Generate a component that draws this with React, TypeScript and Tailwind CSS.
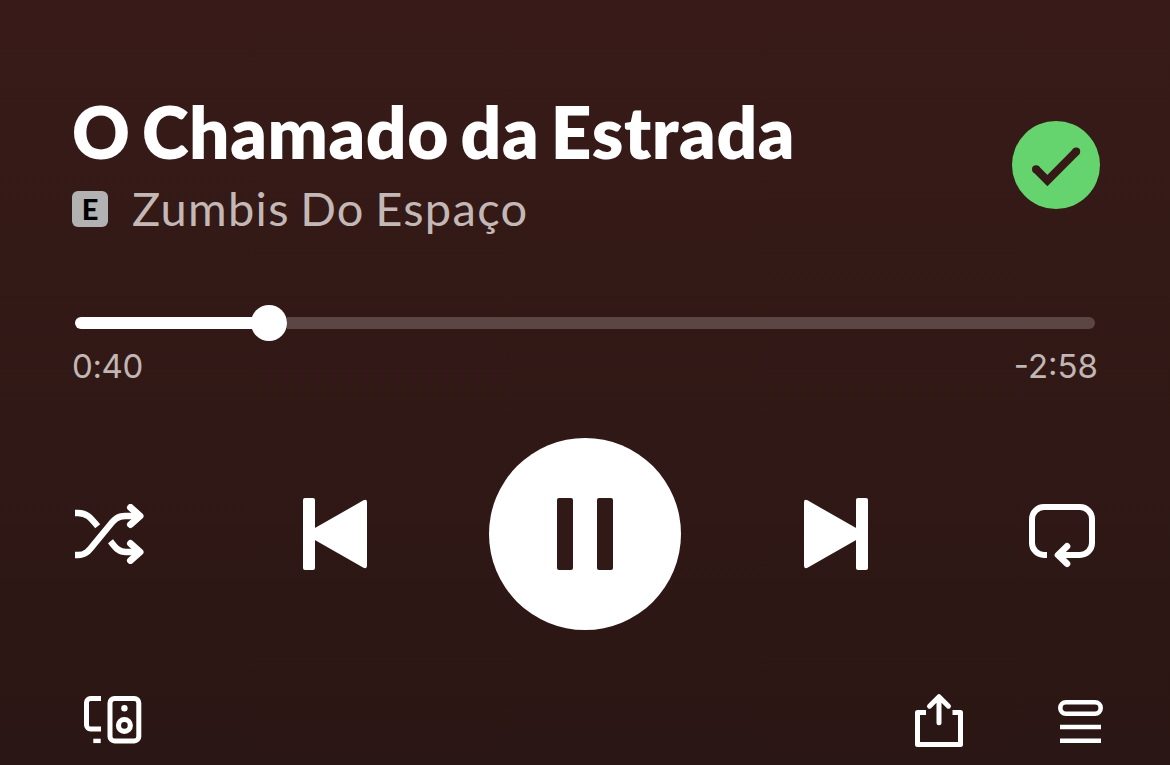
import React from "react";

const TRACK = {
  title: "O Chamado da Estrada",
  artist: "Zumbis Do Espaço",
  elapsed: 40,
  remaining: 178,
};

function formatTime(seconds: number) {
  return `${Math.floor(seconds / 60)}:${String(seconds % 60).padStart(2, "0")}`;
}

function ShuffleIcon() {
  return (
    <svg width="70" height="60" viewBox="0 0 70 60" fill="none" stroke="currentColor" strokeWidth="6.400">
      <path d="M0 9H3C12 9 15.5 13.5 22.7 22.3" />
      <path d="M0 51H3C10.5 51 14 46.500 18 41.500L34.500 21.500C39 16 42.500 12 50 12H64" />
      <path d="M35.500 37.300C40.500 43.500 43.500 48 51 48H64" />
      <path d="M55.500 3.500L65 12L55.500 20.500M55.500 39.500L65 48L55.500 56.500" strokeWidth="7" strokeLinecap="round" strokeLinejoin="round" />
    </svg>
  );
}

function SkipIcon({ className }: { className?: string }) {
  return (
    <svg width="64" height="72" viewBox="0 0 64 72" fill="currentColor" className={className}>
      <rect width="12" height="72" rx="2" />
      <path d="M11 30.600L60.500 2.300Q64 0.800 64 4.300V67.700Q64 71.200 60.500 69.700L11 41.400Z" />
    </svg>
  );
}

function RepeatIcon() {
  return (
    <svg width="66" height="64" viewBox="0 0 66 64" fill="none" stroke="currentColor" strokeWidth="6">
      <path d="M18 51H15A12 12 0 0 1 3 39V15A12 12 0 0 1 15 3H51A12 12 0 0 1 63 15V39A12 12 0 0 1 51 51H29" />
      <path d="M38 42.300L29 51L38 59.700" strokeWidth="6.600" strokeLinecap="round" strokeLinejoin="round" />
    </svg>
  );
}

function DevicesIcon() {
  return (
    <svg width="58" height="48" viewBox="0 0 58 48" fill="none" stroke="currentColor" strokeWidth="5">
      <path d="M17 2.500H6.500A4 4 0 0 0 2.500 6.500V29A4 4 0 0 0 6.500 33H17" />
      <path d="M9.300 44.900H16.700" strokeWidth="4.400" />
      <rect x="26" y="2.500" width="28.800" height="42.400" rx="4.500" />
      <circle cx="40.400" cy="12.200" r="3.200" fill="currentColor" stroke="none" />
      <circle cx="40.400" cy="29.400" r="5.900" strokeWidth="5.200" />
    </svg>
  );
}

function ShareIcon() {
  return (
    <svg width="48" height="54" viewBox="0 0 48 54" fill="none" stroke="currentColor" strokeWidth="5" strokeLinejoin="round">
      <path d="M11 19.500H2.500V51.500H45.500V19.500H37.500" />
      <path d="M24 4V29.700M14.500 13.200L24 3.700L33.500 13.200" strokeLinecap="round" />
    </svg>
  );
}

function QueueIcon() {
  return (
    <svg width="45" height="43" viewBox="0 0 45 43" fill="none" stroke="currentColor" strokeWidth="4.600">
      <rect x="2.300" y="2.300" width="40.400" height="11.400" rx="5.700" />
      <path d="M2 27H43M2 40.700H43" />
    </svg>
  );
}

export default function App() {
  const progress = (TRACK.elapsed / (TRACK.elapsed + TRACK.remaining)) * 100;

  return (
    <div className="w-[1170px] h-[765px] overflow-hidden bg-linear-to-b from-[#381b18] to-[#2a1614] text-white">
      {/* Track info */}
      <header className="flex h-[305px] justify-between pl-[72px] pr-[70px]">
        <div className="pt-[90px]">
          <h1 className="h-[86px] whitespace-nowrap font-[Lato] text-[71px] font-extrabold leading-[84px] tracking-[0.600px] [word-spacing:-5.500px]">
            {TRACK.title}
          </h1>
          <div className="flex items-center pt-[3px]">
            <span className="flex size-9 items-center justify-center rounded-md bg-[#b2b2b2] font-[Lato] text-[29px] font-black leading-9 text-black">
              E
            </span>
            <span className="-mt-px ml-[24px] whitespace-nowrap font-[Lato] text-[47px] leading-[60px] tracking-[1.300px] text-[#c3b8b6] [word-spacing:-3px]">
              {TRACK.artist}
            </span>
          </div>
        </div>
        <button className="mt-[121px] size-[88px] rounded-full bg-[#65d46e] text-[#351a17]">
          <svg width="88" height="88" viewBox="0 0 88 88" fill="none" stroke="currentColor" strokeWidth="8">
            <path d="M24 48.200L35.400 59.600L64.200 30.600" />
            <circle cx="24" cy="48.200" r="4" fill="currentColor" stroke="none" />
            <circle cx="64.200" cy="30.600" r="4" fill="currentColor" stroke="none" />
          </svg>
        </button>
      </header>

      {/* Progress */}
      <div className="h-[133px] px-[75px]">
        <div className="flex h-9 items-center">
          <div className="h-3 rounded-l-full bg-white" style={{ width: `${progress}%` }} />
          <div className="-ml-[11px] size-9 shrink-0 rounded-full bg-white" />
          <div className="h-3 flex-1 rounded-r-full bg-[#5c4643]" />
        </div>
        <div className="-ml-[3px] -mr-[3px] mt-[5px] flex justify-between font-[Inter] text-[33px] leading-[40px] text-[#c1b6b4]">
          <span className="tracking-[-0.400px]">{formatTime(TRACK.elapsed)}</span>
          <span>-{formatTime(TRACK.remaining)}</span>
        </div>
      </div>

      {/* Playback controls */}
      <div className="flex h-[192px] items-center justify-between pl-[75px] pr-[75px]">
        <ShuffleIcon />
        <SkipIcon className="ml-[36px]" />
        <button className="flex size-[192px] items-center justify-center gap-6 rounded-full bg-white">
          <span className="h-[72px] w-4 rounded-xs bg-[#301917]" />
          <span className="h-[72px] w-4 rounded-xs bg-[#301917]" />
        </button>
        <SkipIcon className="ml-px mr-[39px] -scale-x-100" />
        <div className="pt-[4px]">
          <RepeatIcon />
        </div>
      </div>

      {/* Secondary actions */}
      <footer className="flex items-start pl-[84px] pr-[67px] pt-[63px]">
        <div className="pt-[3px]">
          <DevicesIcon />
        </div>
        <div className="ml-auto flex">
          <ShareIcon />
          <div className="ml-[95px] pt-[7px]">
            <QueueIcon />
          </div>
        </div>
      </footer>
    </div>
  );
}
